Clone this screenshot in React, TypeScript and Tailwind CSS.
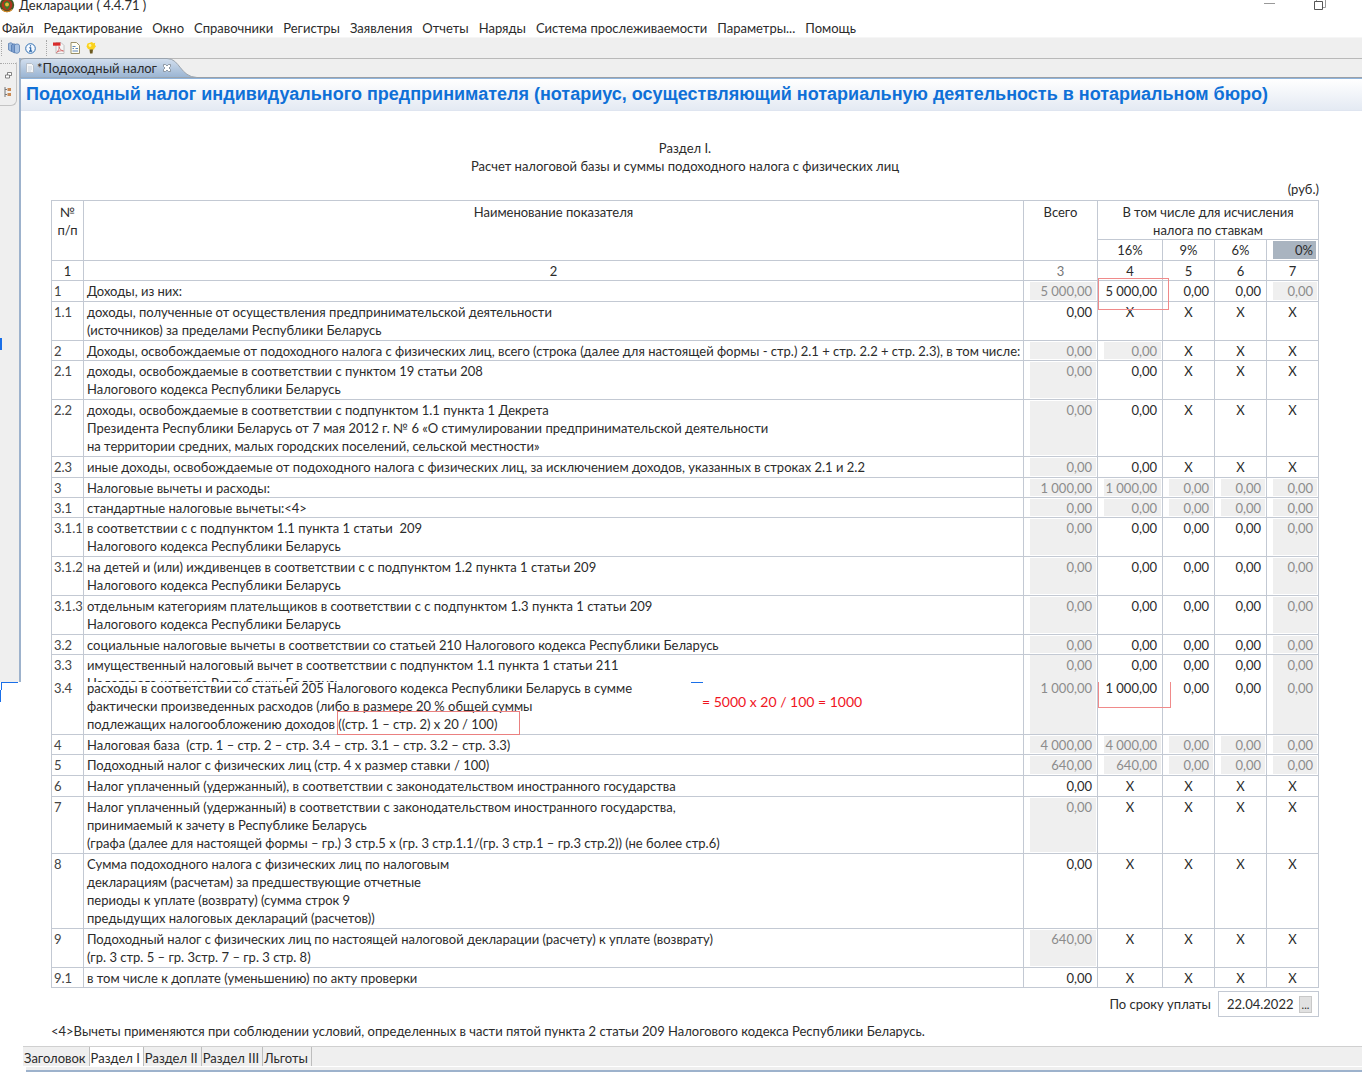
import React from 'react';
import clsx from 'clsx';

type Row = {
  no: string;
  lines: string[];
  // '~' marks a calculated (read-only) value
  values: string[];
  height: string;
  clipped?: boolean;
  flush?: boolean;
};

const menu = ['Файл', 'Редактирование', 'Окно', 'Справочники', 'Регистры', 'Заявления', 'Отчеты', 'Наряды', 'Система прослеживаемости', 'Параметры...', 'Помощь'];

const sheets = ['Заголовок', 'Раздел I', 'Раздел II', 'Раздел III', 'Льготы'];

const rows: Row[] = [
  { no: '1', lines: ['Доходы, из них:'], values: ['~5 000,00', '5 000,00', '0,00', '0,00', '~0,00'], height: 'h-[21px]' },
  { no: '1.1', lines: ['доходы, полученные от осуществления предпринимательской деятельности', '(источников) за пределами Республики Беларусь'], values: ['0,00', 'X', 'X', 'X', 'X'], height: 'h-[39px]' },
  { no: '2', lines: ['Доходы, освобождаемые от подоходного налога с физических лиц, всего (строка (далее для настоящей формы - стр.) 2.1 + стр. 2.2 + стр. 2.3), в том числе:'], values: ['~0,00', '~0,00', 'X', 'X', 'X'], height: 'h-5' },
  { no: '2.1', lines: ['доходы, освобождаемые в соответствии с пунктом 19 статьи 208', 'Налогового кодекса Республики Беларусь'], values: ['~0,00', '0,00', 'X', 'X', 'X'], height: 'h-[39px]' },
  { no: '2.2', lines: ['доходы, освобождаемые в соответствии с подпунктом 1.1 пункта 1 Декрета', 'Президента Республики Беларусь от 7 мая 2012 г. № 6 «О стимулировании предпринимательской деятельности', 'на территории средних, малых городских поселений, сельской местности»'], values: ['~0,00', '0,00', 'X', 'X', 'X'], height: 'h-[57px]' },
  { no: '2.3', lines: ['иные доходы, освобождаемые от подоходного налога с физических лиц, за исключением доходов, указанных в строках 2.1 и 2.2'], values: ['~0,00', '0,00', 'X', 'X', 'X'], height: 'h-[21px]' },
  { no: '3', lines: ['Налоговые вычеты и расходы:'], values: ['~1 000,00', '~1 000,00', '~0,00', '~0,00', '~0,00'], height: 'h-5' },
  { no: '3.1', lines: ['стандартные налоговые вычеты:<4>'], values: ['~0,00', '~0,00', '~0,00', '~0,00', '~0,00'], height: 'h-5' },
  { no: '3.1.1', lines: ['в соответствии с с подпунктом 1.1 пункта 1 статьи  209', 'Налогового кодекса Республики Беларусь'], values: ['~0,00', '0,00', '0,00', '0,00', '~0,00'], height: 'h-[39px]' },
  { no: '3.1.2', lines: ['на детей и (или) иждивенцев в соответствии с с подпунктом 1.2 пункта 1 статьи 209', 'Налогового кодекса Республики Беларусь'], values: ['~0,00', '0,00', '0,00', '0,00', '~0,00'], height: 'h-[39px]' },
  { no: '3.1.3', lines: ['отдельным категориям плательщиков в соответствии с с подпунктом 1.3 пункта 1 статьи 209', 'Налогового кодекса Республики Беларусь'], values: ['~0,00', '0,00', '0,00', '0,00', '~0,00'], height: 'h-[39px]' },
  { no: '3.2', lines: ['социальные налоговые вычеты в соответствии со статьей 210 Налогового кодекса Республики Беларусь'], values: ['~0,00', '0,00', '0,00', '0,00', '~0,00'], height: 'h-5' },
  { no: '3.3', lines: ['имущественный налоговый вычет в соответствии с подпунктом 1.1 пункта 1 статьи 211', 'Налогового кодекса Республики Беларусь'], values: ['~0,00', '0,00', '0,00', '0,00', '~0,00'], height: 'h-6', clipped: true },
  { no: '3.4', lines: ['расходы в соответствии со статьей 205 Налогового кодекса Республики Беларусь в сумме', 'фактически произведенных расходов (либо в размере 20 % общей суммы', 'подлежащих налогообложению доходов ((стр. 1 – стр. 2) х 20 / 100)'], values: ['~1 000,00', '1 000,00', '0,00', '0,00', '~0,00'], height: 'h-14', flush: true },
  { no: '4', lines: ['Налоговая база  (стр. 1 – стр. 2 – стр. 3.4 – стр. 3.1 – стр. 3.2 – стр. 3.3)'], values: ['~4 000,00', '~4 000,00', '~0,00', '~0,00', '~0,00'], height: 'h-5' },
  { no: '5', lines: ['Подоходный налог с физических лиц (стр. 4 x размер ставки / 100)'], values: ['~640,00', '~640,00', '~0,00', '~0,00', '~0,00'], height: 'h-[21px]' },
  { no: '6', lines: ['Налог уплаченный (удержанный), в соответствии с законодательством иностранного государства'], values: ['0,00', 'X', 'X', 'X', 'X'], height: 'h-[21px]' },
  { no: '7', lines: ['Налог уплаченный (удержанный) в соответствии с законодательством иностранного государства,', 'принимаемый к зачету в Республике Беларусь', '(графа (далее для настоящей формы – гр.) 3 стр.5 x (гр. 3 стр.1.1/(гр. 3 стр.1 – гр.3 стр.2)) (не более стр.6)'], values: ['~0,00', 'X', 'X', 'X', 'X'], height: 'h-[57px]' },
  { no: '8', lines: ['Сумма подоходного налога с физических лиц по налоговым', 'декларациям (расчетам) за предшествующие отчетные', 'периоды к уплате (возврату) (сумма строк 9', 'предыдущих налоговых деклараций (расчетов))'], values: ['0,00', 'X', 'X', 'X', 'X'], height: 'h-[75px]' },
  { no: '9', lines: ['Подоходный налог с физических лиц по настоящей налоговой декларации (расчету) к уплате (возврату)', '(гр. 3 стр. 5 – гр. 3стр. 7 – гр. 3 стр. 8)'], values: ['~640,00', 'X', 'X', 'X', 'X'], height: 'h-[39px]' },
  { no: '9.1', lines: ['в том числе к доплате (уменьшению) по акту проверки'], values: ['0,00', 'X', 'X', 'X', 'X'], height: 'h-5' },
];

const TitleBar = () => (
  <header className="flex h-3 items-start bg-white">
    <svg className="-mt-0.5 h-[15px] w-[15px]" viewBox="0 0 15 15">
      <circle cx="7" cy="7" r="7.2" fill="#3f5a26" />
      <circle cx="7" cy="7" r="5.4" fill="#b3341c" />
      <path d="M7 2.5l3.2 2.6-.8 4L7 12 4.600 9.100l-.8-4z" fill="#3d7a2c" />
      <circle cx="7" cy="6.500" r="1.900" fill="#e8b83a" />
      <path d="M2 11.500c3 3 7 3 10 0" stroke="#d8892a" strokeWidth="1.200" fill="none" />
    </svg>
    <h1 className="ml-1 text-[13px] leading-[10px]">Декларации ( 4.4.71 )</h1>
    <button aria-label="Свернуть" className="mr-[39px] ml-auto pt-[3px]">
      <svg className="h-2 w-[11px]" viewBox="0 0 11 8"><path d="M0 .5h11" stroke="#999" /></svg>
    </button>
    <button aria-label="Восстановить" className="mr-9">
      <svg className="h-[11px] w-3" viewBox="0 0 12 11" fill="none" stroke="#555">
        <path d="M2.500 0v1.500M11.500 0v7.500H9" stroke="#999" />
        <path d="M.5 1.500h8v8h-8z" />
      </svg>
    </button>
  </header>
);

const Grip = () => <span className="h-4 border-l border-dotted border-[#a8a8a8]" />;

const ToolBar = () => (
  <div className="flex h-[21px] items-center border-t border-[#f6f6f6] bg-[#efefef] pl-px">
    <Grip />
    <button aria-label="Справочники" className="ml-1.5">
      <svg className="h-3 w-3" viewBox="0 0 12 12" stroke="#4a72ab" strokeWidth=".7">
        <path d="M.5 1.500L3 .7l2 1.300v6L3.500 9.500l-3-1.700z" fill="#9dbbe0" />
        <path d="M3.500 3L6 1.700 8 3v6.500L6.500 11l-3-1.700z" fill="#7d9fce" />
        <path d="M6.500 4c0-1.500 1-2 2.500-2s2.500.5 2.500 2v5c0 1.500-1.500 2.300-3 2.300l-2-.8z" fill="#a9c3e4" />
      </svg>
    </button>
    <button aria-label="О программе" className="ml-[5px]">
      <svg className="h-[11px] w-[11px]" viewBox="0 0 11 11">
        <circle cx="5.500" cy="5.500" r="4.800" fill="#f4f9ff" stroke="#2f6fb3" />
        <path d="M5.500 2.200v1.300M4.300 4.800h1.400v3.200M4 8.100h3.200" stroke="#1d5ca3" strokeWidth="1.100" fill="none" />
      </svg>
    </button>
    <span className="ml-2.5 flex"><Grip /></span>
    <button aria-label="PDF" className="ml-1.5">
      <svg className="h-3 w-3" viewBox="0 0 12 12">
        <path d="M3 .5h5l3 3v8H3z" fill="#f5f5f5" stroke="#b5b5b5" strokeWidth=".8" />
        <path d="M0 .5h7.500v3.200H0z" fill="#d92a2a" />
        <path d="M3.500 10.500c2-1.500 3-4 2.500-6 .5 2.500 2 4 4.500 4.500-2.500-.7-5 0-7 1.500z" stroke="#d06060" strokeWidth=".8" fill="none" />
      </svg>
    </button>
    <button aria-label="Отчет" className="ml-[5px]">
      <svg className="h-3 w-2.5" viewBox="0 0 10 12">
        <path d="M1 .5h5.500l3 3v8H1z" fill="#fffef2" stroke="#9a9068" />
        <path d="M2.500 4.500h3M2.500 6.500h1.500M5.500 6.500H8M2.500 9h5.500" stroke="#4a77b5" strokeWidth=".9" />
      </svg>
    </button>
    <button aria-label="Подсказка" className="ml-1.5">
      <svg className="h-3 w-2.5" viewBox="0 0 10 12">
        <path d="M6 0l1.200 1.300L9.200.8l-.3 2L10 4.500 8.700 5.800 8 7.500 5.500 8 2 7 .5 4.500 1.500 1.500 4 .8z" fill="#fbd21c" />
        <circle cx="4" cy="3.500" r="1.400" fill="#fff3a0" />
        <path d="M3.500 7.500h3.500l-.5 4H4z" fill="#6d5a20" />
      </svg>
    </button>
  </div>
);

const SideRail = () => (
  <aside className="relative h-[624px] w-[21px] shrink-0 border-r-2 border-[#9db2cc] bg-[#efefef]">
    <div className="mt-1 flex h-[44px] w-[17px] flex-col items-center rounded-br-md border-t border-r border-b border-[#c4c4c4] border-t-transparent">
      <span className="w-full border-t border-dotted border-[#aaa]" />
      <button aria-label="Восстановить панель" className="mt-2">
        <svg className="h-[7px] w-[7px]" viewBox="0 0 7 7" fill="#fff" stroke="#666" strokeWidth=".8">
          <path d="M2.500.5h4v3h-4z" /><path d="M.5 3h4v3h-4z" />
        </svg>
      </button>
      <button aria-label="Навигатор" className="mt-2">
        <svg className="h-2.5 w-2" viewBox="0 0 8 10">
          <path d="M1 0v10M1 2.500h2M1 7.500h2" stroke="#777" />
          <path d="M3.500 1h3.500v3H3.500zM3.500 6h3.500v3H3.500z" fill="#c98a55" />
        </svg>
      </button>
    </div>
    <span className="absolute top-[280px] left-0 h-3 w-0.5 bg-[#1a6fe8]" />
    <span className="absolute top-[624px] left-px h-2 w-[17px] border-t border-l border-[#1a6fe8]" />
    <span className="absolute top-[632px] left-0 h-3 w-px bg-[#1a6fe8]" />
  </aside>
);

const EditorTab = () => (
  <div className="-ml-px flex h-5 border-t border-b border-t-[#b9b9b9] border-b-[#9a9fa6] bg-[#efefef]">
    <div className="relative -mt-px flex h-5 w-[180px] items-center">
      <svg className="absolute inset-0 h-full w-full" viewBox="0 0 180 20">
        <defs>
          <linearGradient id="tab" x1="0" y1="0" x2="0" y2="1">
            <stop offset="0" stopColor="#d3dfee" />
            <stop offset="1" stopColor="#98b3d2" />
          </linearGradient>
        </defs>
        <path d="M0 20V5Q0 .5 5 .5H147C160 .5 160 19 177 19.500z" fill="url(#tab)" stroke="#9aa3ad" />
      </svg>
      <svg className="relative ml-1.5 h-2.5 w-2" viewBox="0 0 8 10">
        <path d="M.5.500h5l2 2v7h-7z" fill="#f4f6f8" stroke="#b7bfc9" />
        <path d="M2 4h4M2 6h4M2 8h3" stroke="#b9c6d6" strokeWidth=".7" />
      </svg>
      <button className="relative ml-[3px] text-[13px] leading-[18px] whitespace-nowrap">*Подоходный налог</button>
      <button aria-label="Закрыть" className="relative ml-1.5">
        <svg className="h-2 w-2" viewBox="0 0 8 8" fill="#fff" stroke="#7b8590" strokeWidth=".8">
          <path d="M.5.500h2L4 2 5.500.500h2v2L6 4l1.500 1.500v2h-2L4 6 2.500 7.500h-2v-2L2 4 .5 2.500z" />
        </svg>
      </button>
    </div>
  </div>
);

const cell = 'border-r border-b border-[#c3c9d3] align-top';

const ValueCell = ({ row, index }: { row: Row; index: number }) => {
  const raw = row.values[index];
  const readOnly = raw.startsWith('~');
  const value = raw.replace('~', '');
  return (
    <td
      className={clsx(
        'relative whitespace-nowrap',
        cell,
        row.clipped && 'border-b-0',
        !row.flush && 'pt-px',
        value === 'X' ? 'text-center' : 'pr-[5px] text-right',
        readOnly && 'bg-[#efefef] text-[#8c8c8c]',
        readOnly && (row.clipped || row.flush ? 'shadow-[inset_6px_0_0_#fff,inset_-1px_0_0_#fff]' : 'shadow-[inset_6px_1px_0_#fff,inset_-1px_-1px_0_#fff]'),
      )}
    >
      {value}
      {row.no === '1' && index === 1 && <span className="absolute -top-[3px] left-0 z-10 h-8 w-[71px] border border-[#f08a8a]" />}
      {row.no === '3.4' && index === 1 && <span className="absolute top-[3px] left-0 z-10 h-[26px] w-[73px] border border-t-0 border-[#f08a8a]" />}
    </td>
  );
};

const Declaration = () => (
  <table className="w-full table-fixed border-separate border-spacing-0 border-t border-l border-[#c3c9d3]">
    <colgroup>
      <col className="w-8" />
      <col />
      <col className="w-[74px]" />
      <col className="w-[65px]" />
      <col className="w-[52px]" />
      <col className="w-[52px]" />
      <col className="w-[52px]" />
    </colgroup>
    <thead>
      <tr className="h-[39px]">
        <th rowSpan={2} className={clsx(cell, 'pt-0.5 font-normal')}>№<br />п/п</th>
        <th rowSpan={2} className={clsx(cell, 'pt-0.5 font-normal')}>Наименование показателя</th>
        <th rowSpan={2} className={clsx(cell, 'pt-0.5 font-normal')}>Всего</th>
        <th colSpan={4} className={clsx(cell, 'pt-0.5 font-normal')}>В том числе для исчисления<br />налога по ставкам</th>
      </tr>
      <tr className="h-[21px]">
        <th className={clsx(cell, 'pt-px font-normal')}>16%</th>
        <th className={clsx(cell, 'pt-px font-normal')}>9%</th>
        <th className={clsx(cell, 'pt-px font-normal')}>6%</th>
        <th className={clsx(cell, 'bg-[#a9b4c0] pt-px pr-[5px] text-right font-normal shadow-[inset_6px_1px_0_#fff,inset_-2px_-1px_0_#fff]')}>0%</th>
      </tr>
      <tr className="h-5">
        {[1, 2, 3, 4, 5, 6, 7].map((n) => (
          <th key={n} className={clsx(cell, 'pt-px font-normal', n === 3 && 'text-[#777]')}>{n}</th>
        ))}
      </tr>
    </thead>
    <tbody>
      {rows.map((row) => (
        <tr key={row.no} className={row.height}>
          <td className={clsx(cell, 'pl-0.5 whitespace-nowrap text-[#444]', row.clipped && 'border-b-0', !row.flush && 'pt-px')}>{row.no}</td>
          <td className={clsx(cell, 'relative pl-[3px] whitespace-pre', row.clipped && 'border-b-0', !row.flush && 'pt-px')}>
            <div className={clsx(row.clipped && '-mb-[3px] h-[26px] overflow-hidden')}>
              {row.lines.map((line) => <div key={line}>{line}</div>)}
            </div>
            {row.flush && (
              <>
                <span className="absolute top-8 left-[253px] h-6 w-[183px] border border-[#ea8080]" />
                <span className="absolute top-[3px] left-[607px] h-px w-3 bg-[#1a6fe8]" />
                <span className="absolute top-3.5 left-[618px] text-sm leading-[18px] text-[#f0141e]">= 5000 x 20 / 100 = 1000</span>
              </>
            )}
          </td>
          {row.values.map((_, i) => <ValueCell key={i} row={row} index={i} />)}
        </tr>
      ))}
    </tbody>
  </table>
);

const SheetTabs = () => (
  <footer className="ml-0.5">
    <nav className="flex h-5 border-t border-[#d0d0d0] bg-[#efefef]">
      {sheets.map((sheet, i) => (
        <button key={sheet} className={clsx('border-r border-[#bdbdbd] pt-0.5 pr-[3px] pl-px whitespace-nowrap', i === 1 && 'bg-white')}>
          {sheet}
        </button>
      ))}
    </nav>
    <div className="ml-[3px] h-1 border-t border-white bg-[#efefef]" />
    <div className="ml-[3px] h-0.5 bg-[#9db2cc]" />
  </footer>
);

const App = () => {
  return (
    <div className="overflow-hidden bg-white font-['Lato','Noto_Sans',sans-serif] text-[13px] leading-[18px] text-[#2b2b2b]">
      <TitleBar />
      <nav className="flex h-[25px] items-center gap-2.5 pt-1.5 pl-0.5">
        {menu.map((item) => <button key={item} className="whitespace-nowrap">{item}</button>)}
      </nav>
      <ToolBar />
      <div className="flex items-start">
        <SideRail />
        <main className="min-w-0 flex-1">
          <EditorTab />
          <h2 className="h-[33px] border-t border-b border-t-[#8fb4dc] border-b-[#dfe5f0] bg-gradient-to-b from-white to-[#e4eaf3] pl-[5px] font-['Liberation_Sans',Arial,sans-serif] text-[18px] leading-[30px] font-bold whitespace-nowrap text-[#0f70d7]">
            Подоходный налог индивидуального предпринимателя (нотариус, осуществляющий нотариальную деятельность в нотариальном бюро)
          </h2>
          <div className="pt-7 pr-[43px] pl-[30px]">
            <p className="text-center">Раздел I.</p>
            <p className="text-center">Расчет налоговой базы и суммы подоходного налога с физических лиц</p>
            <p className="mt-[5px] mb-0.5 text-right">(руб.)</p>
            <Declaration />
            <div className="mt-[3px] flex items-center justify-end">
              <label htmlFor="due" className="mr-[7px]">По сроку уплаты</label>
              <div className="flex h-[26px] w-[101px] items-center border border-[#c3c9d3] pl-2">
                <input id="due" defaultValue="22.04.2022" className="w-[72px] outline-none" />
                <button aria-label="Выбрать дату" className="flex h-[17px] w-[13px] items-end justify-center border border-[#c8c8c8] bg-[#e1e1e1] text-[11px] leading-[14px]">...</button>
              </div>
            </div>
            <p className="mt-[5px] mb-1.5">&lt;4&gt;Вычеты применяются при соблюдении условий, определенных в части пятой пункта 2 статьи 209 Налогового кодекса Республики Беларусь.</p>
          </div>
          <SheetTabs />
        </main>
      </div>
    </div>
  );
};

export default App;
